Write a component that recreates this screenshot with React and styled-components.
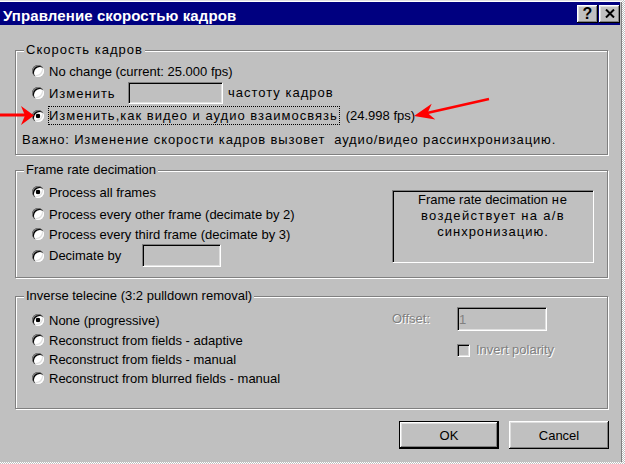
import React from 'react';
import styled, { createGlobalStyle } from 'styled-components';

const GlobalStyle = createGlobalStyle`
  html, body { margin: 0; padding: 0; }
  body {
    width: 625px;
    height: 464px;
    overflow: hidden;
    background: repeating-conic-gradient(#c0c0c0 0 25%, #ffffff 0 50%) 0 0 / 2px 2px;
    font-family: "Liberation Sans", Arial, sans-serif;
    font-size: 13px;
    color: #000;
  }
`;

const Stage = styled.div`
  position: relative;
  width: 625px;
  height: 464px;
`;

const Dialog = styled.div`
  width: 622px;
  height: 462px;
  box-sizing: border-box;
  padding: 2px 2px 0 0;
  background: #c0c0c0;
  display: flex;
  flex-direction: column;
  box-shadow: inset 0 1px #dfdfdf, inset 0 2px #ffffff, inset -1px 0 #808080;
`;

const TitleBar = styled.div`
  height: 23px;
  flex-shrink: 0;
  background: #000080;
  display: flex;
  align-items: center;
  padding-left: 3px;
`;

const TitleText = styled.div`
  flex: 1;
  align-self: flex-start;
  padding-top: 5px;
  line-height: 17px;
  color: #ffffff;
  font-weight: bold;
  font-size: 15px;
  letter-spacing: 0.1px;
  white-space: nowrap;
`;

const TitleButtons = styled.div`
  display: flex;
  gap: 1px;
`;

const TitleButton = styled.div`
  width: 21px;
  height: 18px;
  box-sizing: border-box;
  background: #c0c0c0;
  display: flex;
  align-items: center;
  justify-content: center;
  font-weight: bold;
  font-size: 16px;
  line-height: 16px;
  box-shadow: inset -1px -1px #000000, inset 1px 1px #ffffff,
    inset -2px -2px #808080, inset 2px 2px #dfdfdf;
`;

const Client = styled.div`
  flex: 1;
  display: flex;
  flex-direction: column;
  padding: 0 11px 0 15px;
`;

const GroupBox = styled.div`
  margin-top: ${(p) => p.$mt}px;
  margin-right: 1px;
  height: ${(p) => p.$h}px;
  box-sizing: border-box;
  border: 1px solid #808080;
  box-shadow: inset 1px 1px #ffffff, 1px 1px #ffffff;
  display: flex;
  flex-direction: column;
`;

const GroupTitle = styled.div`
  align-self: flex-start;
  margin: -9px 0 0 8px;
  padding: 0 2px;
  line-height: 16px;
  background: #c0c0c0;
  white-space: nowrap;
`;

const GroupBody = styled.div`
  display: flex;
  justify-content: space-between;
  align-items: flex-start;
`;

const Column = styled.div`
  display: flex;
  flex-direction: column;
`;

const Row = styled.div`
  display: flex;
  align-items: center;
  height: ${(p) => p.$h}px;
  margin-top: ${(p) => p.$mt || 0}px;
  padding-left: ${(p) => (p.$pl == null ? 16 : p.$pl)}px;
  line-height: 16px;
  white-space: pre;
`;

/* Cyrillic text is drawn a little wider in the original dialog font */
const Ru = styled.span`
  letter-spacing: ${(p) => (p.$ls == null ? 1 : p.$ls)}px;
`;

const Radio = styled.span`
  width: 12px;
  height: 12px;
  flex-shrink: 0;
  border-radius: 50%;
  background: ${(p) =>
    p.$checked
      ? 'radial-gradient(circle at 50% 50%, #000 0 2px, #fff 2.6px)'
      : '#ffffff'};
  box-shadow: inset 1px 1px 0 #808080, inset 2px 2px 0 #000000,
    inset -1px -1px 0 #ffffff, inset -2px -2px 0 #dfdfdf;
`;

const Label = styled.span`
  margin-left: 4px;
  box-sizing: border-box;
  ${(p) => (p.$w ? `width: ${p.$w}px;` : '')}
  padding-right: 1px;
  line-height: 17px;
  border: 1px dotted ${(p) => (p.$focus ? '#000000' : 'transparent')};
`;

const After = styled.span`
  margin-left: ${(p) => p.$ml}px;
`;

const Field = styled.input`
  box-sizing: border-box;
  flex-shrink: 0;
  width: ${(p) => p.$w}px;
  height: ${(p) => p.$h}px;
  margin: 0;
  padding: 0 0 0 1px;
  background: #c0c0c0;
  border: 1px solid;
  border-color: #808080 #ffffff #ffffff #808080;
  box-shadow: inset 1px 1px #000000, inset -1px -1px #dfdfdf;
  font-family: inherit;
  font-size: 13px;
  line-height: 16px;
  color: #808080;
  outline: none;
  align-self: ${(p) => (p.$top ? 'flex-start' : 'auto')};
  padding-top: ${(p) => (p.$top ? 1 : 0)}px;
`;

const InfoBox = styled.div`
  margin: 12px 13px 0 0;
  width: 202px;
  height: 73px;
  box-sizing: border-box;
  border: 1px solid;
  border-color: #808080 #ffffff #ffffff #808080;
  box-shadow: inset 1px 1px #000000;
  padding-top: 1px;
  text-align: center;
  line-height: 16px;
  white-space: nowrap;
`;

const SideColumn = styled.div`
  width: 155px;
  margin: 3px 60px 0 0;
  display: flex;
  flex-direction: column;
`;

const OffsetRow = styled.div`
  display: flex;
  align-items: center;
`;

const Disabled = styled.span`
  color: #808080;
  text-shadow: 1px 1px 0 #ffffff;
  width: ${(p) => (p.$w ? `${p.$w}px` : 'auto')};
  flex-shrink: 0;
  line-height: 16px;
  white-space: nowrap;
`;

const CheckRow = styled.div`
  margin-top: 11px;
  padding-left: 65px;
  display: flex;
  align-items: center;
  gap: 6px;
`;

const CheckBox = styled.span`
  width: 13px;
  height: 13px;
  flex-shrink: 0;
  box-sizing: border-box;
  border: 1px solid;
  border-color: #808080 #ffffff #ffffff #808080;
  box-shadow: inset 1px 1px #000000, inset -1px -1px #dfdfdf;
  background: #c0c0c0;
`;

const ButtonRow = styled.div`
  margin-top: 12px;
  display: flex;
  justify-content: flex-end;
  gap: 10px;
`;

const Button = styled.button`
  width: 100px;
  height: 28px;
  margin: 0;
  padding: 0;
  border: none;
  background: #c0c0c0;
  font-family: inherit;
  font-size: 13px;
  color: #000000;
  box-shadow: ${(p) =>
    p.$default
      ? 'inset 0 0 0 1px #000000, inset -2px -2px #000000, inset 2px 2px #ffffff, inset -3px -3px #808080, inset 3px 3px #dfdfdf'
      : 'inset -1px -1px #000000, inset 1px 1px #ffffff, inset -2px -2px #808080, inset 2px 2px #dfdfdf'};
`;

const Annotations = styled.svg`
  position: absolute;
  left: 0;
  top: 0;
  pointer-events: none;
`;

function RadioRow({ checked, focus, w, h, mt, children, after }) {
  return (
    <Row $h={h} $mt={mt}>
      <Radio $checked={checked} />
      <Label $focus={focus} $w={w}>{children}</Label>
      {after}
    </Row>
  );
}

export default function App() {
  return (
    <Stage>
      <GlobalStyle />
      <Dialog>
        <TitleBar>
          <TitleText>Управление скоростью кадров</TitleText>
          <TitleButtons>
            <TitleButton>?</TitleButton>
            <TitleButton>
              <svg width="10" height="9" viewBox="0 0 10 9">
                <path d="M1 0.5 L9 8.5 M9 0.5 L1 8.5" stroke="#000" strokeWidth="2" />
              </svg>
            </TitleButton>
          </TitleButtons>
        </TitleBar>

        <Client>
          <GroupBox $mt={25} $h={105}>
            <GroupTitle><Ru>Скорость кадров</Ru></GroupTitle>
            <RadioRow h={20} mt={3}>No change (current: 25.000 fps)</RadioRow>
            <RadioRow
              h={22}
              mt={1}
              w={80}
              after={
                <>
                  <Field $w={95} $h={22} readOnly value="" />
                  <After $ml={5}><Ru>частоту кадров</Ru></After>
                </>
              }
            >
              <Ru>Изменить</Ru>
            </RadioRow>
            <RadioRow
              h={19}
              mt={2}
              checked
              focus
              after={<After $ml={6}>(24.998 fps)</After>}
            >
              <Ru>Изменить,как видео и аудио взаимосвязь</Ru>
            </RadioRow>
            <Row $h={20} $mt={5} $pl={6}>
              <Ru $ls={0.85}>Важно: Изменение скорости кадров вызовет  аудио/видео рассинхронизацию.</Ru>
            </Row>
          </GroupBox>

          <GroupBox $mt={15} $h={108}>
            <GroupTitle>Frame rate decimation</GroupTitle>
            <GroupBody>
              <Column>
                <RadioRow h={20} mt={4} checked>Process all frames</RadioRow>
                <RadioRow h={20} mt={2}>Process every other frame (decimate by 2)</RadioRow>
                <RadioRow h={20}>Process every third frame (decimate by 3)</RadioRow>
                <RadioRow h={23} w={94} after={<Field $w={79} $h={23} readOnly value="" />}>
                  Decimate by
                </RadioRow>
              </Column>
              <InfoBox>
                Frame rate decimation <Ru>не</Ru>
                <br />
                <Ru $ls={1.3}>воздействует на а/в</Ru>
                <br />
                <Ru>синхронизацию.</Ru>
              </InfoBox>
            </GroupBody>
          </GroupBox>

          <GroupBox $mt={18} $h={113}>
            <GroupTitle>Inverse telecine (3:2 pulldown removal)</GroupTitle>
            <GroupBody>
              <Column>
                <RadioRow h={20} mt={6} checked>None (progressive)</RadioRow>
                <RadioRow h={20}>Reconstruct from fields - adaptive</RadioRow>
                <RadioRow h={18}>Reconstruct from fields - manual</RadioRow>
                <RadioRow h={20}>Reconstruct from blurred fields - manual</RadioRow>
              </Column>
              <SideColumn>
                <OffsetRow>
                  <Disabled $w={65}>Offset:</Disabled>
                  <Field $w={90} $h={24} $top readOnly value="1" disabled />
                </OffsetRow>
                <CheckRow>
                  <CheckBox />
                  <Disabled>Invert polarity</Disabled>
                </CheckRow>
              </SideColumn>
            </GroupBody>
          </GroupBox>

          <ButtonRow>
            <Button $default>OK</Button>
            <Button>Cancel</Button>
          </ButtonRow>
        </Client>
      </Dialog>

      <Annotations width="625" height="464" viewBox="0 0 625 464">
        <line x1="0" y1="115" x2="26" y2="115" stroke="#ff0000" strokeWidth="3" />
        <polygon points="34,115.5 21,106 25,115.5 21,125" fill="#ff0000" />
        <line x1="489" y1="99" x2="427" y2="113" stroke="#ff0000" strokeWidth="2.6" />
        <polygon points="414,116 431.7,103.8 427.6,112.9 435.3,119.4" fill="#ff0000" />
      </Annotations>
    </Stage>
  );
}
